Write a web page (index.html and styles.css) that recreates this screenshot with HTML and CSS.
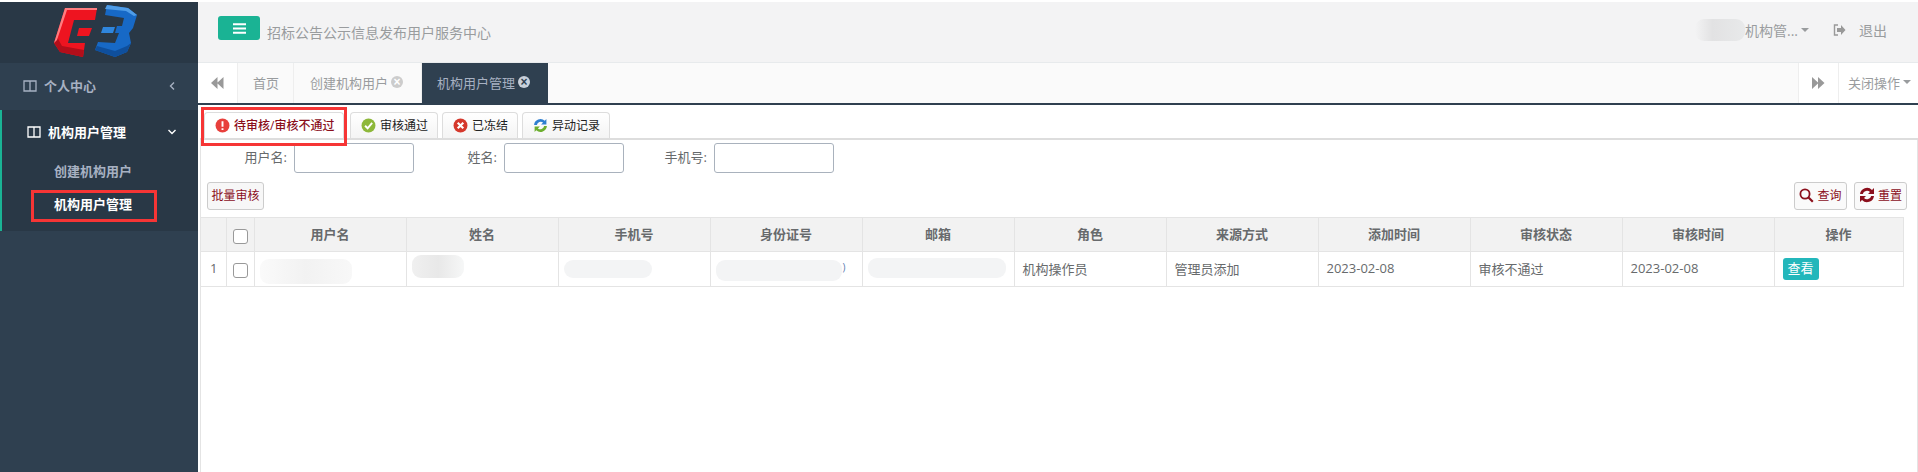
FILE: index.html
```html
<!DOCTYPE html>
<html lang="zh-CN">
<head>
<meta charset="utf-8">
<title>机构用户管理</title>
<link rel="stylesheet" href="styles.css">
</head>
<body>
<div class="shell">
  <aside class="sidebar">
    <div class="logo">
      <svg width="92" height="58" viewBox="50 2 92 58">
        <path d="M65 8H97L95 20H74L68 43H85L83 57L60 52L54 43Z" fill="#ee1420"/>
        <path d="M54 43L60 52L83 57L84 50L62 46L57 37Z" fill="#b30e1a"/>
        <path d="M65 8L54 43L57 40L67 10H97V8Z" fill="#ff7d80"/>
        <path d="M79 28H92L89 36H77Z" fill="#ee1420"/>
        <path d="M107 5L128 8L137 15L133 28L129 33L131 43L127 52L115 57L95 50L98 42L115 43L119 33H115L117 26H122L124 18L105 15Z" fill="#1769c6"/>
        <path d="M95 50L115 57L127 52L131 43L127 46L115 51L97 46Z" fill="#0f4f9c"/>
        <path d="M107 5L105 9L126 11L134 16L137 15L128 8Z" fill="#4f9de8"/>
        <path d="M103 27H115L113 33H101Z" fill="#2f86dd"/>
      </svg>
    </div>
    <nav class="nav">
      <div class="nav-item">
        <svg class="nav-ico" viewBox="0 0 14 14"><path d="M1 2H13V12H1ZM7 2V12" fill="none" stroke="currentColor" stroke-width="1.3"/></svg>
        <span class="nav-label">个人中心</span>
        <svg class="chev" viewBox="0 0 8 10"><path d="M6 1.5L2.5 5L6 8.5" fill="none" stroke="currentColor" stroke-width="1.4"/></svg>
      </div>
      <div class="nav-group">
        <div class="nav-item nav-item-open">
          <svg class="nav-ico" viewBox="0 0 14 14"><path d="M1 2H13V12H1ZM7 2V12" fill="none" stroke="currentColor" stroke-width="1.3"/></svg>
          <span class="nav-label">机构用户管理</span>
          <svg class="chev chev-down" viewBox="0 0 10 8"><path d="M1.5 2L5 5.5L8.5 2" fill="none" stroke="currentColor" stroke-width="1.4"/></svg>
        </div>
        <a class="sub-item">创建机构用户</a>
        <a class="sub-item sub-active">机构用户管理<span class="mark mark-side"></span></a>
      </div>
    </nav>
  </aside>

  <main class="main">
    <header class="topbar">
      <button class="menu-btn"><svg width="13" height="11" viewBox="0 0 13 11"><path d="M0 1.2H13M0 5.5H13M0 9.8H13" stroke="#fff" stroke-width="2"/></svg></button>
      <span class="site-title">招标公告公示信息发布用户服务中心</span>
      <div class="top-right">
        <span class="blur blur-user"></span>
        <span class="user-name">机构管...</span><i class="caret"></i>
        <svg class="exit-ico" width="13" height="12" viewBox="0 0 13 12"><path d="M5 1H1.5V11H5" fill="none" stroke="#999" stroke-width="1.4"/><path d="M4 4H8V1L12.5 6L8 11V8H4Z" fill="#999"/></svg>
        <span class="exit">退出</span>
      </div>
    </header>

    <div class="tabbar">
      <div class="tab-arrow tab-arrow-l"><svg width="13" height="12" viewBox="0 0 13 12"><path d="M6.5 0V12L0 6ZM12.5 0V12L6 6Z" fill="#999"/></svg></div>
      <div class="page-tab tab-home">首页</div>
      <div class="page-tab tab-create">创建机构用户<span class="x x-grey">×</span></div>
      <div class="page-tab tab-current">机构用户管理<span class="x x-light">×</span></div>
      <div class="tab-fill"></div>
      <div class="tab-arrow tab-arrow-r"><svg width="13" height="12" viewBox="0 0 13 12"><path d="M0 0V12L6.5 6ZM6 0V12L12.5 6Z" fill="#999"/></svg></div>
      <div class="close-ops">关闭操作<i class="caret"></i></div>
    </div>

    <section class="content">
      <div class="subtabs">
        <div class="subtab subtab-on">
          <svg class="st-ico" viewBox="0 0 14 14"><circle cx="7" cy="7" r="6.5" fill="#e8403c"/><path d="M7 3V8.2M7 9.6V11.2" stroke="#fff" stroke-width="1.8"/></svg>
          <span class="st-text">待审核/审核不通过</span><span class="mark mark-tab"></span>
        </div>
        <div class="subtab">
          <svg class="st-ico" viewBox="0 0 14 14"><circle cx="7" cy="7" r="6.5" fill="#8db83a"/><path d="M3.8 7.2L6.2 9.6L10.4 4.6" fill="none" stroke="#fff" stroke-width="1.8"/></svg>
          <span class="st-text">审核通过</span>
        </div>
        <div class="subtab">
          <svg class="st-ico" viewBox="0 0 14 14"><circle cx="7" cy="7" r="6.5" fill="#d5382c"/><path d="M4.4 4.4L9.6 9.6M9.6 4.4L4.4 9.6" stroke="#fff" stroke-width="2"/></svg>
          <span class="st-text">已冻结</span>
        </div>
        <div class="subtab">
          <svg class="st-ico" viewBox="0 0 14 14"><path d="M1 6.5A6 6 0 0 1 11 2.6L12.5 1V6H7.6L9.4 4.3A3.6 3.6 0 0 0 3.6 6.5Z" fill="#2f7fd0"/><path d="M13 7.5A6 6 0 0 1 3 11.4L1.5 13V8H6.4L4.6 9.7A3.6 3.6 0 0 0 10.4 7.5Z" fill="#6cae2e"/></svg>
          <span class="st-text">异动记录</span>
        </div>
      </div>

      <div class="panel">
        <div class="search-row">
          <label class="field"><span class="field-label">用户名:</span><input class="field-input" type="text"></label>
          <label class="field"><span class="field-label">姓名:</span><input class="field-input" type="text"></label>
          <label class="field"><span class="field-label">手机号:</span><input class="field-input" type="text"></label>
        </div>
        <div class="action-row">
          <button class="act-btn batch">批量审核</button>
          <div class="act-right">
            <button class="act-btn">
              <svg width="15" height="15" viewBox="0 0 15 15"><circle cx="6" cy="6" r="4.6" fill="none" stroke="#8b0f1c" stroke-width="1.8"/><path d="M9.5 9.5L13.8 13.8" stroke="#8b0f1c" stroke-width="2.2"/></svg>
              查询
            </button>
            <button class="act-btn">
              <svg width="16" height="16" viewBox="0 0 16 16"><path d="M1 7A7 7 0 0 1 13 3L15 1V7H9L11 5A4.3 4.3 0 0 0 3.8 7Z" fill="#8b0f1c"/><path d="M15 9A7 7 0 0 1 3 13L1 15V9H7L5 11A4.3 4.3 0 0 0 12.2 9Z" fill="#8b0f1c"/></svg>
              重置
            </button>
          </div>
        </div>
        <table class="grid">
          <colgroup>
            <col class="c-num"><col class="c-chk">
            <col class="c-data"><col class="c-data"><col class="c-data"><col class="c-data"><col class="c-data"><col class="c-data"><col class="c-data"><col class="c-data"><col class="c-data"><col class="c-data">
            <col class="c-op">
          </colgroup>
          <thead>
            <tr>
              <th></th><th><span class="chk"></span></th>
              <th>用户名</th><th>姓名</th><th>手机号</th><th>身份证号</th><th>邮箱</th><th>角色</th><th>来源方式</th><th>添加时间</th><th>审核状态</th><th>审核时间</th><th>操作</th>
            </tr>
          </thead>
          <tbody>
            <tr>
              <td class="num">1</td><td class="center"><span class="chk"></span></td>
              <td class="blur-cell"><span class="blur blur-a"></span></td>
              <td class="blur-cell"><span class="blur blur-b"></span></td>
              <td class="blur-cell"><span class="blur blur-c"></span></td>
              <td class="blur-cell"><span class="blur blur-d"></span><span class="tail">)</span></td>
              <td class="blur-cell"><span class="blur blur-e"></span></td>
              <td>机构操作员</td><td>管理员添加</td><td>2023-02-08</td><td>审核不通过</td><td>2023-02-08</td>
              <td class="op-cell"><span class="view">查看</span></td>
            </tr>
          </tbody>
        </table>
      </div>
    </section>
  </main>
</div>
</body>
</html>
```

FILE: styles.css
```css
* { box-sizing: border-box; }
html, body { margin: 0; height: 100%; }
body {
  font-family: "Open Sans", "Noto Sans CJK SC", "Liberation Sans", sans-serif;
  font-size: 13px;
  color: #676a6c;
  background: #fff;
  overflow: hidden;
}
button { font: inherit; }
.shell { display: flex; height: 472px; padding-top: 2px; background: #fff; }
.sidebar { width: 198px; flex: none; background: #2f4050; color: #a7b1c2; }
.logo { height: 61px; background: #293846; display: flex; justify-content: flex-start; align-items: flex-start; padding-left: 50px; }
.nav { display: flex; flex-direction: column; }
.nav-item { height: 47px; display: flex; align-items: center; padding-left: 23px; padding-bottom: 2px; font-weight: 700; }
.nav-ico { width: 14px; height: 14px; flex: none; }
.nav-label { margin-left: 7px; }
.chev { width: 8px; height: 10px; margin-left: auto; margin-right: 22px; }
.nav-group { background: #293846; border-left: 2px solid #1ab394; height: 121px; }
.nav-item-open { color: #fff; height: 45px; padding-left: 25px; }
.chev-down { width: 10px; height: 8px; margin-right: 21px; }
.sub-item { position: relative; display: block; height: 33px; line-height: 33px; padding-left: 52px; font-weight: 700; }
.sub-active { color: #fff; }
.mark { position: absolute; border: 3px solid #f63535; pointer-events: none; }
.mark-side { left: 29px; top: 2px; width: 126px; height: 32px; }
.mark-tab { left: -4px; top: -6px; width: 146px; height: 39px; }

.main { flex: 1; min-width: 0; display: flex; flex-direction: column; }
.topbar { height: 60px; background: #f3f3f4; display: flex; align-items: flex-start; padding-left: 20px; flex: none; }
.menu-btn { width: 42px; height: 24px; margin-top: 14px; background: #1ab394; border: 0; border-radius: 3px; padding: 0; display: flex; align-items: center; justify-content: center; }
.site-title { margin: 21px 0 0 7px; font-size: 14px; line-height: 20px; color: #999c9e; }
.top-right { margin-left: auto; display: flex; align-items: center; height: 60px; padding: 0 31px 4px 0; color: #999c9e; font-size: 14px; }
.caret { display: inline-block; width: 0; height: 0; border-left: 4px solid transparent; border-right: 4px solid transparent; border-top: 4px solid #999c9e; margin-left: 3px; }
.exit-ico { margin-left: 24px; }
.exit { margin-left: 13px; }

.tabbar { height: 43px; flex: none; display: flex; background: #fafafa; border-bottom: 2px solid #2f4050; border-top: 1px solid #e7eaec; color: #999c9e; }
.tab-arrow { width: 40px; display: flex; align-items: center; justify-content: center; background: #fff; }
.tab-arrow-l { border-right: 1px solid #eee; }
.tab-arrow-r { border-left: 1px solid #eee; }
.page-tab { display: flex; align-items: center; padding: 0 0 2px 15px; border-right: 1px solid #eee; white-space: nowrap; }
.tab-home { width: 56px; }
.tab-create { width: 128px; padding-left: 16px; }
.tab-current { background: #2f4050; color: #a7b1c2; border-right: 0; width: 126px; }
.tab-fill { flex: 1; }
.close-ops { width: 80px; background: #fff; border-left: 1px solid #eee; display: flex; align-items: center; padding: 0 0 2px 9px; white-space: nowrap; }
.x { width: 12px; height: 12px; border-radius: 50%; font-size: 12px; line-height: 12px; text-align: center; margin-left: 3px; font-weight: 700; font-family: "Liberation Sans", sans-serif; }
.x-grey { background: #ccc; color: #fff; }
.x-light { background: #c8d0da; color: #2f4050; }

.content { flex: 1; min-height: 0; padding: 7px 0 0 2px; display: flex; flex-direction: column; }
.subtabs { display: flex; gap: 4px; height: 28px; padding-left: 4px; border-bottom: 2px solid #ddd; flex: none; }
.subtab { position: relative; display: flex; align-items: center; gap: 4px; height: 26px; padding: 0 9px 0 10px; border: 1px solid #ddd; border-bottom: 0; border-radius: 4px 4px 0 0; background: linear-gradient(#fff, #f4f4f4); color: #222; white-space: nowrap; font-size: 12px; }
.st-text { padding-bottom: 2px; }
.subtab-on { background: #fff; color: #8b0f1c; font-weight: 500; width: 140px; margin-right: 2px; }
.st-ico { width: 15px; height: 15px; flex: none; }

.panel { flex: 1; border-left: 1px solid #e4e4e4; border-right: 1px solid #e4e4e4; min-height: 0; }
.search-row { display: flex; height: 36px; padding-top: 3px; }
.field { display: flex; align-items: flex-start; width: 210px; }
.field:first-child { width: 213px; }
.field-label { width: 93px; text-align: right; line-height: 28px; padding-right: 7px; color: #676a6c; white-space: nowrap; }
.field-input { width: 120px; height: 30px; border: 1px solid #a9b2bd; border-radius: 3px; background: #fff; padding: 0; }
.action-row { display: flex; height: 41px; padding: 6px 10px 0 6px; align-items: flex-start; }
.act-right { margin-left: auto; display: flex; gap: 7px; }
.act-btn { height: 28px; width: 53px; padding: 0 0 2px; background: #fafafa; border: 1px solid #ccc; border-radius: 3px; color: #8b0f1c; display: flex; align-items: center; justify-content: center; gap: 3px; font-size: 12px; white-space: nowrap; }
.batch { width: 57px; background: #f7f7f7; }

.grid { table-layout: fixed; border-collapse: collapse; width: 1702px; }
.c-num { width: 25px; } .c-chk { width: 28px; } .c-data { width: 152px; } .c-op { width: 129px; }
.grid th, .grid td { height: 35px; border: 1px solid #e4e4e4; padding: 0 8px 2px; white-space: nowrap; overflow: hidden; text-align: left; font-weight: 400; }
.grid th { background: #f2f2f2; text-align: center; font-weight: 700; color: #676a6c; height: 34px; }
.grid th:first-child, .grid td:first-child { border-left: 0; }
.grid .num { padding: 0 0 2px 9px; }
.grid .center { text-align: center; padding: 0; }
.grid th:nth-child(2) { padding: 0; }
.grid .blur-cell { vertical-align: top; padding: 0 0 0 5px; }
.grid .op-cell { padding-bottom: 0; }
.chk { display: inline-block; width: 15px; height: 15px; border: 1px solid #999; border-radius: 3px; background: #fff; vertical-align: middle; }
.view { display: inline-block; width: 36px; height: 22px; line-height: 21px; text-align: center; background: #23b7bb; color: #fff; border-radius: 3px; vertical-align: middle; }

.blur { display: inline-block; background: #f3f4f5; border-radius: 9px; vertical-align: top; }
.blur-user { width: 50px; height: 22px; background: linear-gradient(90deg, #f3f3f4, #e2e2e3 35%, #e8e9ea); }
.blur-a { width: 92px; height: 25px; margin-top: 7px; background: linear-gradient(90deg, #fafafa, #f2f2f2 50%, #f8f8f8); }
.blur-b { width: 52px; height: 23px; margin-top: 3px; background: linear-gradient(90deg, #f0f0f0, #e8e8e8 50%, #f6f7f7); }
.blur-c { width: 88px; height: 18px; margin-top: 8px; }
.blur-d { width: 126px; height: 21px; margin-top: 8px; }
.blur-e { width: 138px; height: 20px; margin-top: 6px; }
.tail { font-size: 10px; line-height: 30px; color: #5a7ab0; margin-left: 1px; vertical-align: top; }
```
